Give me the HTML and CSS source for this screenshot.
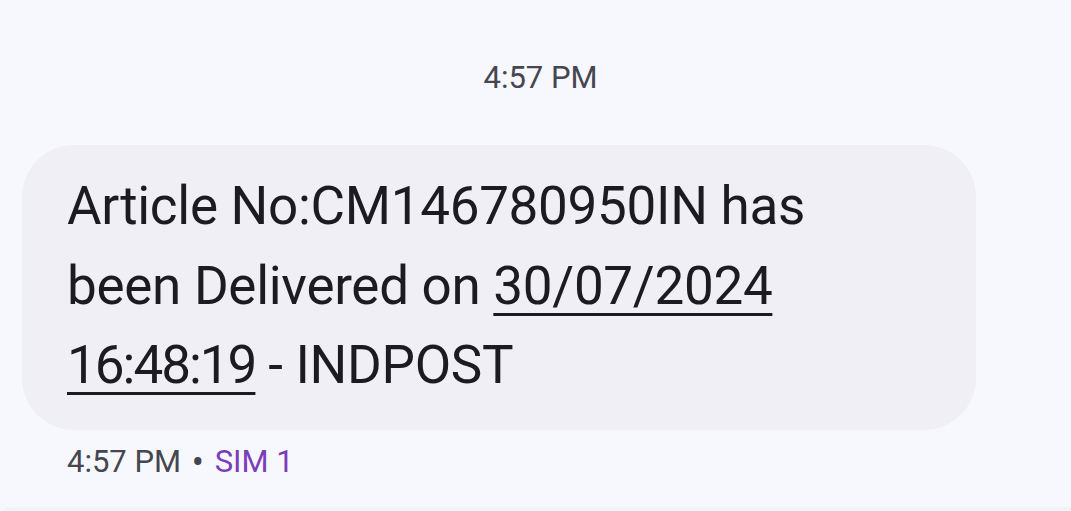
FILE: index.html
```html
<!DOCTYPE html>
<html>
<head>
<meta charset="utf-8">
<link rel="stylesheet" href="styles.css">
</head>
<body>
<div class="thread">
  <div class="stamp">4:57 PM</div>
  <div class="msg">
    <div class="bubble">Article No:CM146780950IN has<br>been Delivered on <span class="link">30/07/2024</span><br><span class="link num">16:48:19</span> - INDPOST</div>
    <div class="meta">4:57 PM <span class="dot">•</span> <span class="sim">SIM 1</span></div>
  </div>
  <div class="next"></div>
</div>
</body>
</html>
```
FILE: styles.css
```css
html, body {
  margin: 0;
  padding: 0;
  background: #f7f8fd;
}
body {
  width: 1071px;
  height: 511px;
  overflow: hidden;
  font-family: Roboto, "Noto Sans", sans-serif;
}
.thread {
  display: flex;
  flex-direction: column;
}
.stamp {
  margin-top: 60px;
  padding-left: 10px;
  text-align: center;
  font-size: 31px;
  line-height: 36px;
  color: #45464f;
}
.msg {
  margin-top: 49px;
  padding-left: 22px;
  display: flex;
  flex-direction: column;
}
.bubble {
  width: 954px;
  box-sizing: border-box;
  background: #f0eff5;
  border-radius: 52px;
  padding: 22px 100px 24px 45px;
  font-size: 53px;
  letter-spacing: -0.3px;
  line-height: 79.5px;
  color: #1b1b21;
}
.link {
  text-decoration: underline;
  text-decoration-thickness: 3px;
  text-underline-offset: 9px;
}
.num {
  letter-spacing: -2px;
}
.meta {
  margin-top: 14px;
  padding-left: 45px;
  font-size: 31px;
  line-height: 36px;
  color: #45464f;
}
.dot {
  margin: 0 3px;
  font-size: 36px;
  vertical-align: -3px;
  line-height: 1;
}
.sim {
  color: #7b3db9;
}
.next {
  margin-top: 26px;
  margin-left: 3px;
  height: 6px;
  background: #f1f1f8;
  border-radius: 18px 0 0 0;
}
```
